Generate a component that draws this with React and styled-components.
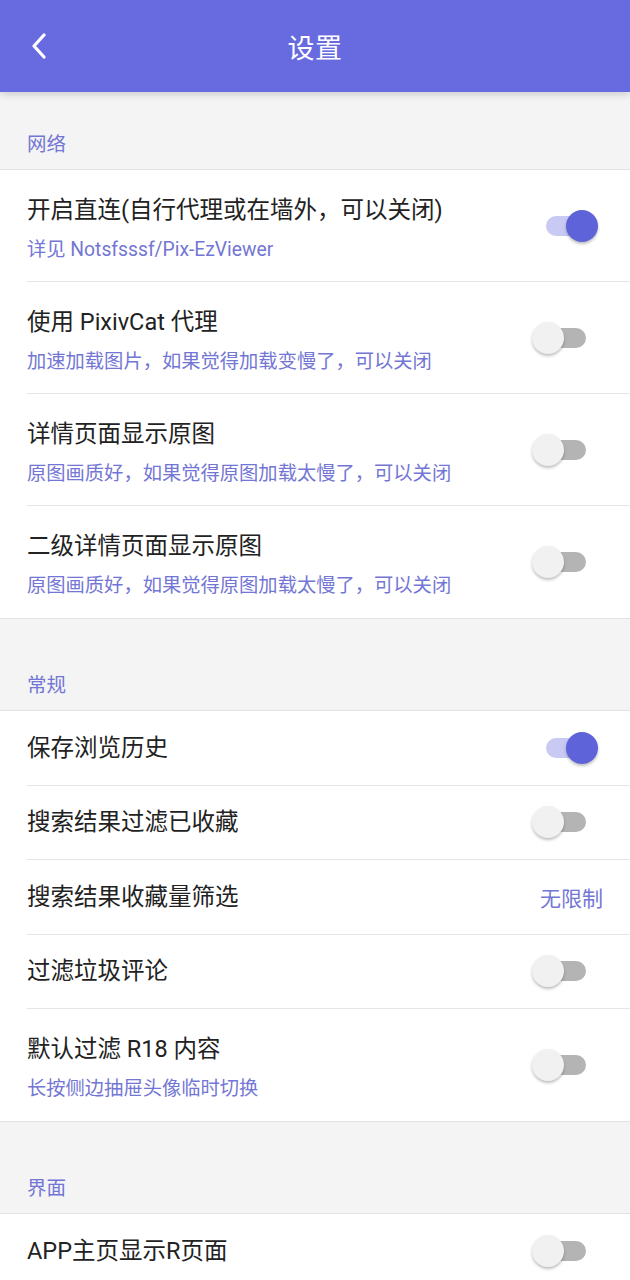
import React from "react";
import styled, { createGlobalStyle } from "styled-components";

const Global = createGlobalStyle`
  html, body { margin: 0; padding: 0; background: #f4f4f4; }
  body { font-family: Roboto, "Noto Sans CJK SC", sans-serif; -webkit-font-smoothing: antialiased; }
  * { box-sizing: border-box; }
`;

const Page = styled.div`
  width: 630px;
  min-height: 1280px;
  background: #f4f4f4;
  position: relative;
`;

const Header = styled.header`
  height: 92px;
  background: #686be0;
  display: flex;
  align-items: center;
  justify-content: center;
  position: relative;
  box-shadow: 0 2px 8px rgba(0, 0, 0, 0.18);
  z-index: 1;
`;

const BackButton = styled.button`
  position: absolute;
  left: 22px;
  top: 24px;
  width: 34px;
  height: 44px;
  border: none;
  background: transparent;
  padding: 0;
  display: flex;
  align-items: center;
  justify-content: center;
`;

const Title = styled.h1`
  margin: 0;
  color: #fff;
  font-size: 27px;
  font-weight: 400;
  letter-spacing: 0.5px;
`;

const SectionHead = styled.div`
  padding: ${(p) => (p.$first ? "39px" : "53px")} 27px 0;
  height: ${(p) => (p.$first ? "78px" : "92px")};
  border-bottom: 1px solid #e2e2e2;
  color: #7376d4;
  font-size: 19.5px;
  line-height: 28px;
`;

const Group = styled.div`
  background: #fff;
  border-bottom: 1px solid #e2e2e2;
`;

const Row = styled.div`
  height: ${(p) => (p.$tall ? "112px" : "74.5px")};
  margin-left: 27px;
  padding-right: 27px;
  display: flex;
  align-items: center;
  justify-content: space-between;
  border-bottom: ${(p) => (p.$last ? "none" : "1px solid #e6e6e6")};
`;

const Texts = styled.div`
  display: flex;
  flex-direction: column;
  gap: 14px;
  margin-top: ${(p) => (p.$tall ? "6px" : "0")};
`;

const RowTitle = styled.div`
  color: #222;
  font-size: 23.5px;
  line-height: 28px;
`;

const RowSub = styled.div`
  color: #7376d4;
  font-size: 19.3px;
  line-height: 24px;
`;

const Value = styled.div`
  color: #7376d4;
  font-size: 21px;
`;

const SwitchWrap = styled.div`
  position: relative;
  width: 66px;
  height: 32px;
  margin-right: 5px;
  flex-shrink: 0;
`;

const Track = styled.div`
  position: absolute;
  left: 14px;
  top: 6px;
  width: 40px;
  height: 20px;
  border-radius: 10px;
  background: ${(p) => (p.$on ? "#c9caf4" : "#b4b4b4")};
`;

const Thumb = styled.div`
  position: absolute;
  top: 0;
  left: ${(p) => (p.$on ? "34px" : "0")};
  width: 32px;
  height: 32px;
  border-radius: 50%;
  background: ${(p) => (p.$on ? "#5f63d9" : "#f1f1f1")};
  box-shadow: 0 2px 3px rgba(0, 0, 0, 0.25);
`;

function Switch({ on }) {
  return (
    <SwitchWrap>
      <Track $on={on} />
      <Thumb $on={on} />
    </SwitchWrap>
  );
}

const sections = [
  {
    title: "网络",
    items: [
      { t: "开启直连(自行代理或在墙外，可以关闭)", s: "详见 Notsfsssf/Pix-EzViewer", on: true },
      { t: "使用 PixivCat 代理", s: "加速加载图片，如果觉得加载变慢了，可以关闭", on: false },
      { t: "详情页面显示原图", s: "原图画质好，如果觉得原图加载太慢了，可以关闭", on: false },
      { t: "二级详情页面显示原图", s: "原图画质好，如果觉得原图加载太慢了，可以关闭", on: false },
    ],
  },
  {
    title: "常规",
    items: [
      { t: "保存浏览历史", on: true },
      { t: "搜索结果过滤已收藏", on: false },
      { t: "搜索结果收藏量筛选", value: "无限制" },
      { t: "过滤垃圾评论", on: false },
      { t: "默认过滤 R18 内容", s: "长按侧边抽屉头像临时切换", on: false },
    ],
  },
  {
    title: "界面",
    items: [{ t: "APP主页显示R页面", on: false }],
  },
];

export default function App() {
  return (
    <Page>
      <Global />
      <Header>
        <BackButton aria-label="back">
          <svg width="16" height="26" viewBox="0 0 16 26" fill="none">
            <path d="M13 2 L3 13 L13 24" stroke="#fff" strokeWidth="3.2" strokeLinecap="round" strokeLinejoin="round" />
          </svg>
        </BackButton>
        <Title>设置</Title>
      </Header>
      {sections.map((sec, si) => (
        <React.Fragment key={sec.title}>
          <SectionHead $first={si === 0}>{sec.title}</SectionHead>
          <Group>
            {sec.items.map((it, i) => (
              <Row key={it.t} $tall={!!it.s} $last={i === sec.items.length - 1}>
                <Texts $tall={!!it.s}>
                  <RowTitle>{it.t}</RowTitle>
                  {it.s && <RowSub>{it.s}</RowSub>}
                </Texts>
                {it.value ? <Value>{it.value}</Value> : <Switch on={it.on} />}
              </Row>
            ))}
          </Group>
        </React.Fragment>
      ))}
    </Page>
  );
}
